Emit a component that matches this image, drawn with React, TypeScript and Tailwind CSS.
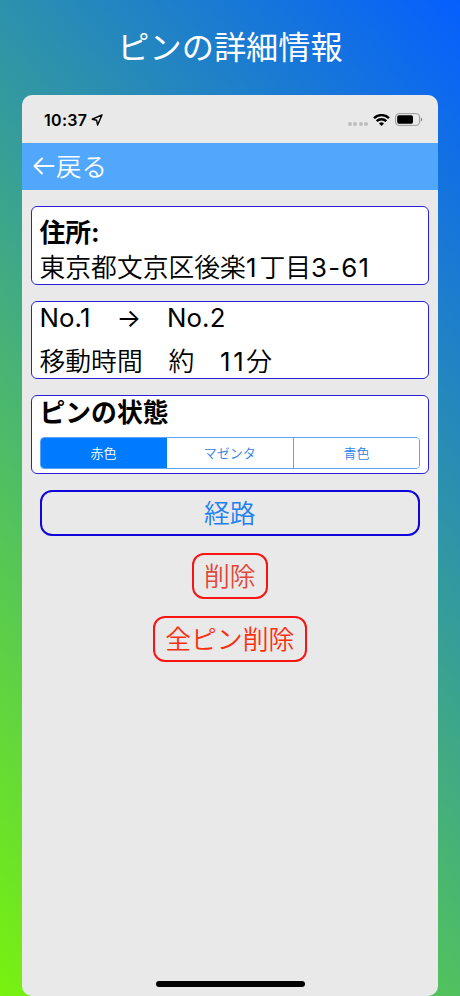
import clsx from "clsx";

const pinColors = ["赤色", "マゼンタ", "青色"];

const StatusBar = () => (
  <div className="flex h-12 items-center pt-px pl-[22px] pr-[15px]">
    <span className="text-[16px] leading-none font-semibold tracking-[0.3px]">
      10:37
    </span>
    <svg viewBox="0 0 12 12" className="ml-[3.5px] h-3 w-3">
      <path
        d="M11 1 1.2 5.2 5.6 6.2 6.6 11Z"
        fill="none"
        stroke="#000"
        strokeWidth="1.4"
        strokeLinejoin="round"
      />
    </svg>

    {/* No signal */}
    <div className="mt-2 ml-auto flex gap-[1.4px]">
      <i className="h-1 w-1 rounded-full bg-[#bdbdbd]" />
      <i className="h-1 w-1 rounded-full bg-[#bdbdbd]" />
      <i className="h-1 w-1 rounded-full bg-[#bdbdbd]" />
      <i className="h-1 w-1 rounded-full bg-[#bdbdbd]" />
    </div>

    {/* Wifi */}
    <svg viewBox="0 0 17 12" className="ml-[5px] h-3 w-[17px]">
      <path
        d="M1 4.2a10.6 10.6 0 0 1 15 0M3.7 7.2a6.8 6.8 0 0 1 9.6 0"
        fill="none"
        stroke="#000"
        strokeWidth="2.4"
      />
      <path d="M8.5 12 6 9.5a3.6 3.6 0 0 1 5 0Z" />
    </svg>

    {/* Battery */}
    <svg viewBox="0 0 28 13" className="ml-[5px] h-[13px] w-7">
      <rect
        x="0.6"
        y="0.6"
        width="24"
        height="11.8"
        rx="3.4"
        fill="none"
        stroke="#9b9b9b"
      />
      <rect x="2.2" y="2.2" width="15.8" height="8.6" rx="1.7" />
      <path d="M25.8 4.5v4c1-.3 1.4-1.1 1.4-2s-.4-1.7-1.4-2Z" fill="#8a8a8a" />
    </svg>
  </div>
);

const App = () => {
  return (
    <div className="flex h-[996px] w-[460px] flex-col items-center bg-[linear-gradient(228deg,#055fff,#78f20f)] font-[Inter,'Noto_Sans_CJK_JP',sans-serif] text-black">
      <h1 className="flex h-[95px] items-center pt-0.5 text-[32.2px] leading-none font-normal text-white">
        ピンの詳細情報
      </h1>

      <main className="flex h-[901px] w-[416px] flex-col overflow-hidden rounded-[10px] bg-[#e9e9e9]">
        <StatusBar />

        <header className="flex h-[46.5px] items-center bg-[#50a7fc] pl-[10px] text-[25.5px] leading-none font-[350] text-white">
          <svg viewBox="0 0 24 18" className="h-[18px] w-6">
            <path
              d="M10 1.5 2.5 9l7.5 7.5M2.5 9h19"
              fill="none"
              stroke="#fff"
              strokeWidth="2"
              strokeLinecap="round"
              strokeLinejoin="round"
            />
          </svg>
          <span>戻る</span>
        </header>

        <div className="flex flex-col gap-4 pt-[16.5px] pr-[9px] pl-[8.5px] text-[25.8px]">
          <section className="h-[78.5px] rounded-md border border-[#2a20d8] bg-white px-2 pt-2">
            <h2 className="leading-[35px] font-bold">住所:</h2>
            <p className="leading-[35px] font-[350] whitespace-nowrap">
              東京都文京区後楽
              <span className="font-normal tracking-[3px]">1</span>丁目
              <span className="font-normal tracking-[1.2px]">3-61</span>
            </p>
          </section>

          <section className="h-[78.5px] rounded-md border border-[#2a20d8] bg-white px-2 font-[350] whitespace-pre">
            <p className="leading-[32px] font-normal tracking-[0.1px]">
              No.1　→　No.2
            </p>
            <p className="mt-[10px] leading-[36px]">
              {"移動時間　約　"}
              <span className="font-normal tracking-[2.6px]">11</span>分
            </p>
          </section>

          <section className="h-[78.5px] rounded-md border border-[#2a20d8] bg-white px-2">
            <h2 className="leading-[33px] font-bold">ピンの状態</h2>
            <div className="mt-2 grid h-8 grid-cols-3 overflow-hidden rounded border border-[#5ca2f5]">
              {pinColors.map((color, i) => (
                <button
                  key={color}
                  className={clsx(
                    "text-[13px] leading-none font-[350]",
                    i === 0
                      ? "bg-[#007aff] text-white"
                      : "bg-white text-[#2f82e6]",
                    i === 2 && "border-l border-[#5ca2f5]"
                  )}
                >
                  {color}
                </button>
              ))}
            </div>
          </section>
        </div>

        <div className="mt-4 flex flex-col items-center gap-[16.5px] pr-[18px] pl-[17.5px] text-[25.8px] leading-none font-[350]">
          <button className="h-[46.5px] w-full rounded-xl border-2 border-[#1006dc] pt-0.5 text-[#1f80f0]">
            経路
          </button>
          <button className="h-[46.5px] w-[76px] rounded-xl border-2 border-[#f91414] pt-0.5 text-[#e0483a]">
            削除
          </button>
          <button className="h-[46.5px] w-[154px] rounded-xl border-2 border-[#f91414] pt-0.5 text-[#fb3010]">
            全ピン削除
          </button>
        </div>

        {/* Home indicator */}
        <div className="mt-auto mb-[9px] h-[6px] w-[149px] self-center rounded-full bg-black" />
      </main>
    </div>
  );
};

export default App;
